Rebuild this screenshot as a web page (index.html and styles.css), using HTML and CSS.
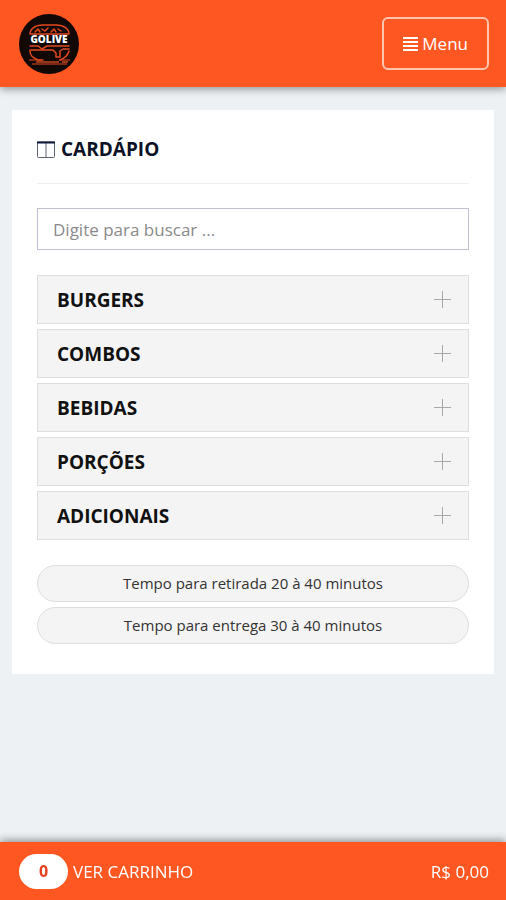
FILE: index.html
```html
<!DOCTYPE html>
<html lang="pt-BR">
<head>
  <meta charset="UTF-8">
  <meta name="viewport" content="width=device-width, initial-scale=1.0">
  <title>Cardápio</title>
  <link rel="stylesheet" href="styles.css">
</head>
<body>

<header class="topbar">
  <a href="#" class="logo" aria-label="Golive">
    <svg viewBox="0 0 60 60" width="60" height="60">
      <circle cx="30" cy="30" r="30" fill="#120806"/>
      <g fill="none" stroke="#e2491f" stroke-width="1.5" stroke-linejoin="round" stroke-linecap="round">
        <!-- top bun -->
        <path d="M11 20c0-5 5-9 13-9h13c8 0 13 4 13 9z"/>
        <path d="M16 18l3-3 2 3M23 15l3 2 3-3M32 18l3-3 2 3M39 15l3 2"/>
        <!-- filling -->
        <path d="M11 32h8l4 3 5-3h22"/>
        <path d="M11 36h23l3 3v4h4v-6l3-2h6"/>
        <path d="M11 37c0 5 3 7 8 9h5M41 46c5-2 8-5 9-9"/>
      </g>
      <path d="M10 46h12M40 46h11M13 50h35" stroke="#e2491f" stroke-width="1"/>
      <path d="M17 48h23M43 48h6" stroke="#93371f" stroke-width="2"/>
      <text x="30" y="29" text-anchor="middle" class="logo-text">GOLIVE</text>
    </svg>
  </a>
  <button type="button" class="menu-btn">
    <svg viewBox="0 0 15 14" width="15" height="14" aria-hidden="true">
      <path d="M0 1h15M0 5h15M0 9h15M0 13h15" stroke="#fff" stroke-width="2"/>
    </svg>
    Menu
  </button>
</header>

<main class="card">
  <h1 class="card-title">
    <svg viewBox="0 0 18 17" width="18" height="17" aria-hidden="true">
      <rect x="0.500" y="1" width="17" height="15.500" rx="1" fill="none" stroke="#5d6270"/>
      <path d="M9 2v14" stroke="#5d6270"/>
      <path d="M0 1.500h18" stroke="#0b1638" stroke-width="2"/>
    </svg>
    CARDÁPIO
  </h1>

  <input type="search" class="search" placeholder="Digite para buscar ..." aria-label="Buscar no cardápio">

  <div class="categories">
    <button type="button" class="category">BURGERS <span class="plus"></span></button>
    <button type="button" class="category">COMBOS <span class="plus"></span></button>
    <button type="button" class="category">BEBIDAS <span class="plus"></span></button>
    <button type="button" class="category">PORÇÕES <span class="plus"></span></button>
    <button type="button" class="category">ADICIONAIS <span class="plus"></span></button>
  </div>

  <div class="times">
    <p class="time">Tempo para retirada 20 à 40 minutos</p>
    <p class="time">Tempo para entrega 30 à 40 minutos</p>
  </div>
</main>

<footer class="cart-bar">
  <a href="#" class="cart-link"><span class="cart-count">0</span> VER CARRINHO</a>
  <span class="cart-total">R$ 0,00</span>
</footer>

</body>
</html>
```
FILE: styles.css
```css
* {
  box-sizing: border-box;
}

body {
  margin: 0;
  padding-bottom: 80px;
  font-family: 'Open Sans', sans-serif;
  background-color: #edf1f4;
  color: #111;
}

.topbar {
  display: flex;
  justify-content: space-between;
  align-items: center;
  height: 87px;
  padding: 0 17px 0 19px;
  background-color: #ff5722;
  box-shadow: 0 2px 8px rgba(0,0,0,0.4);
}

.logo svg {
  display: block;
}

.logo-text {
  font-family: 'Open Sans', sans-serif;
  font-size: 10px;
  font-weight: 800;
  fill: #fff;
}

.menu-btn {
  display: flex;
  justify-content: center;
  align-items: center;
  gap: 4px;
  height: 53px;
  padding: 0 19px;
  border: 2px solid #ffc3ae;
  border-radius: 6px;
  background: none;
  color: #fff;
  font-family: inherit;
  font-size: 17px;
  font-weight: 500;
  cursor: pointer;
}

.card {
  margin: 23px 12px 0;
  padding: 24px 25px 30px;
  background-color: #fff;
}

.card-title {
  display: flex;
  align-items: center;
  gap: 6px;
  margin: 0 0 24px;
  padding-bottom: 19px;
  border-bottom: 1px solid #eceef0;
  color: #0c1226;
  font-size: 19px;
  font-weight: bold;
  line-height: 30px;
}

.search {
  display: block;
  width: 100%;
  height: 42px;
  margin-bottom: 25px;
  padding: 0 15px;
  border: 1px solid #bfc1d2;
  border-radius: 0;
  background-color: #fff;
  color: #333;
  font-family: inherit;
  font-size: 17px;
}

.search::placeholder {
  color: #8a8a8a;
}

.categories {
  display: grid;
  gap: 5px;
  margin-bottom: 25px;
}

.category {
  display: flex;
  justify-content: space-between;
  align-items: center;
  height: 49px;
  padding: 0 17px 0 19px;
  border: 1px solid #dedede;
  background-color: #f4f4f4;
  color: #111;
  font-family: inherit;
  font-size: 19px;
  font-weight: bold;
  cursor: pointer;
}

.plus {
  width: 17px;
  height: 17px;
  background:
    linear-gradient(#a8a8a8, #a8a8a8) center / 17px 1px no-repeat,
    linear-gradient(#a8a8a8, #a8a8a8) center / 1px 17px no-repeat;
}

.times {
  display: grid;
  gap: 5px;
}

.time {
  margin: 0;
  border: 1px solid #dedede;
  border-radius: 20px;
  background-color: #f4f4f4;
  color: #333;
  font-size: 15px;
  line-height: 35px;
  text-align: center;
}

.cart-bar {
  position: fixed;
  left: 0;
  right: 0;
  bottom: 0;
  display: flex;
  justify-content: space-between;
  align-items: center;
  height: 58px;
  padding: 0 17px 0 19px;
  background-color: #ff5722;
  box-shadow: 0 -2px 8px rgba(0,0,0,0.4);
  color: #fff;
  font-size: 17px;
  font-weight: 500;
}

.cart-link {
  display: flex;
  align-items: center;
  gap: 5px;
  color: #fff;
  text-decoration: none;
}

.cart-count {
  width: 49px;
  border-radius: 18px;
  background-color: #fff;
  color: #e8401c;
  font-size: 16px;
  font-weight: bold;
  line-height: 35px;
  text-align: center;
}
```
